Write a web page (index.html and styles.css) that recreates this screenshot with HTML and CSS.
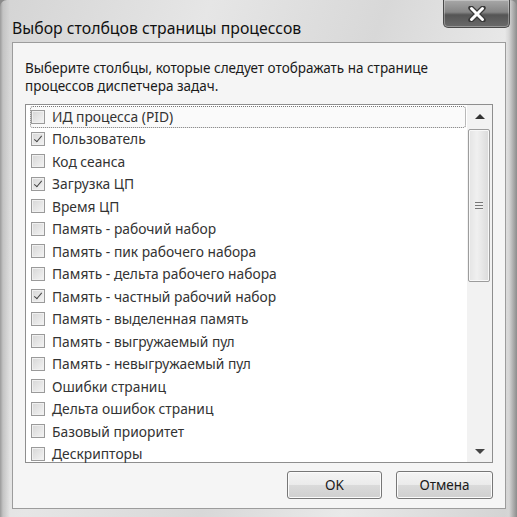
FILE: index.html
```html
<!DOCTYPE html>
<html lang="ru">
<head>
  <meta charset="UTF-8">
  <title>Выбор столбцов страницы процессов</title>
  <link rel="stylesheet" href="styles.css">
</head>
<body>

<div class="window">
  <div class="titlebar">
    <div class="title">Выбор столбцов страницы процессов</div>
    <div class="close-btn">
      <svg width="20" height="16" viewBox="0 0 20 16">
        <path d="M4 2 L16 14 M16 2 L4 14" stroke="#3a3a3a" stroke-width="5.4" stroke-linecap="round"/>
        <path d="M4.5 2.5 L15.5 13.5 M15.5 2.5 L4.5 13.5" stroke="#ffffff" stroke-width="3" stroke-linecap="round"/>
      </svg>
    </div>
  </div>

  <div class="client">
    <p class="hint">Выберите столбцы, которые следует отображать на странице<br>процессов диспетчера задач.</p>

    <div class="listbox">
      <ul class="items">
        <li class="item focused"><span class="check"></span>ИД процесса (PID)</li>
        <li class="item"><span class="check on"></span>Пользователь</li>
        <li class="item"><span class="check"></span>Код сеанса</li>
        <li class="item"><span class="check on"></span>Загрузка ЦП</li>
        <li class="item"><span class="check"></span>Время ЦП</li>
        <li class="item"><span class="check"></span>Память - рабочий набор</li>
        <li class="item"><span class="check"></span>Память - пик рабочего набора</li>
        <li class="item"><span class="check"></span>Память - дельта рабочего набора</li>
        <li class="item"><span class="check on"></span>Память - частный рабочий набор</li>
        <li class="item"><span class="check"></span>Память - выделенная память</li>
        <li class="item"><span class="check"></span>Память - выгружаемый пул</li>
        <li class="item"><span class="check"></span>Память - невыгружаемый пул</li>
        <li class="item"><span class="check"></span>Ошибки страниц</li>
        <li class="item"><span class="check"></span>Дельта ошибок страниц</li>
        <li class="item"><span class="check"></span>Базовый приоритет</li>
        <li class="item"><span class="check"></span>Дескрипторы</li>
      </ul>

      <!-- vertical scrollbar -->
      <div class="scrollbar">
        <div class="arrow up"></div>
        <div class="track">
          <div class="thumb"><span class="grip"></span></div>
        </div>
        <div class="arrow down"></div>
      </div>
    </div>

    <div class="buttons">
      <button class="btn">OK</button>
      <button class="btn">Отмена</button>
    </div>
  </div>
</div>

</body>
</html>
```

FILE: styles.css
```css
body {
  margin: 0;
  background-color: #8a8a8a;
  font-family: 'Noto Sans', 'Open Sans', sans-serif;
  color: #222;
}
.window {
  width: 517px;
  height: 517px;
  box-sizing: border-box;
  display: flex;
  flex-direction: column;
  border-radius: 7px 7px 0 0;
  background:
    linear-gradient(to right, #9a9a9a 0, #c4c4c4 3px, rgba(220,220,220,0) 10px),
    linear-gradient(to left, #8c8c8c 0, #b0b0b0 4px, #d6d6d6 8px, rgba(220,220,220,0) 12px),
    linear-gradient(110deg, #d4d4d4 0%, #e6e6e6 30%, #d8d8d8 55%, #e9e9e9 75%, #d2d2d2 100%);
  overflow: hidden;
}
/* Title bar */
.titlebar {
  height: 42px;
  display: flex;
  align-items: flex-start;
  padding: 0 7px 0 12px;
}
.title {
  padding-top: 17px;
  font-size: 15.8px;
  line-height: 22px;
  color: #111;
}
.close-btn {
  margin-left: auto;
  width: 67px;
  height: 28px;
  box-sizing: border-box;
  display: flex;
  align-items: center;
  justify-content: center;
  border: 1px solid #4a4a4a;
  border-top: none;
  border-radius: 0 0 5px 5px;
  background: linear-gradient(to bottom, #a8a8a8 0%, #858585 45%, #555 55%, #6a6a6a 100%);
  box-shadow: inset 0 0 0 1px rgba(255,255,255,0.3);
}
/* Client area */
.client {
  margin: 0 11px 8px 12px;
  height: 467px;
  box-sizing: border-box;
  border: 1px solid #9c9c9c;
  background-color: #f5f5f5;
  padding: 16px 12px 8px 12px;
  display: flex;
  flex-direction: column;
}
.hint {
  margin: 0 0 1px;
  font-size: 13.5px;
  line-height: 18px;
  color: #1a1a1a;
}
.listbox {
  margin-top: 8px;
  height: 359px;
  box-sizing: border-box;
  border: 1px solid #8e8e8e;
  background-color: #fff;
  display: flex;
}
.items {
  list-style: none;
  margin: 0;
  padding: 0;
  flex: 1;
}
.item {
  height: 22.5px;
  box-sizing: border-box;
  display: flex;
  align-items: center;
  gap: 7px;
  padding-left: 5px;
  font-size: 13.8px;
  color: #333;
  white-space: nowrap;
}
.item.focused {
  margin: 1px 1px 0 4px;
  padding-left: 0;
  height: 21.5px;
  border: 1px dotted #777;
  border-radius: 3px;
  background-color: #fafafa;
}
.check {
  width: 14px;
  height: 14px;
  box-sizing: border-box;
  border: 1px solid #9a9a9a;
  background: linear-gradient(135deg, #d6d6d6, #f4f4f4);
  box-shadow: inset 0 0 0 1px #f0f0f0;
  flex-shrink: 0;
  position: relative;
}
.check.on::after {
  content: "";
  position: absolute;
  left: 4px;
  top: 1px;
  width: 3px;
  height: 7px;
  border: solid #444;
  border-width: 0 1.6px 1.6px 0;
  transform: rotate(40deg);
}
/* Scrollbar */
.scrollbar {
  width: 24px;
  display: flex;
  flex-direction: column;
  background-color: #f2f2f2;
  padding-left: 1px;
}
.arrow {
  height: 24px;
  display: flex;
  align-items: center;
  justify-content: center;
}
.arrow::before {
  content: "";
  border-left: 5px solid transparent;
  border-right: 5px solid transparent;
}
.arrow.up::before {
  border-bottom: 5px solid #333;
  margin-top: -1px;
}
.arrow.down::before {
  border-top: 5px solid #444;
  margin-top: 2px;
}
.track {
  flex: 1;
  padding: 0 2px 0 0;
}
.thumb {
  height: 153px;
  box-sizing: border-box;
  border: 1px solid #9c9c9c;
  border-radius: 2px;
  background: linear-gradient(to right, #e4e4e4, #f0f0f0 40%, #dadada);
  box-shadow: inset 0 0 0 1px #f8f8f8;
  display: flex;
  align-items: center;
  justify-content: center;
}
.grip {
  width: 8px;
  height: 8px;
  background: repeating-linear-gradient(to bottom, #777 0, #777 1px, #eee 1px, #eee 3px);
}
/* Buttons */
.buttons {
  margin-top: 8px;
  display: flex;
  justify-content: flex-end;
  gap: 14px;
}
.btn {
  height: 28px;
  width: 95px;
  font-family: 'Noto Sans', 'Open Sans', sans-serif;
  font-size: 13.5px;
  color: #1a1a1a;
  border: 1px solid #777;
  border-radius: 3px;
  background: linear-gradient(to bottom, #f4f4f4 0%, #ebebeb 48%, #dadada 52%, #cfcfcf 100%);
  box-shadow: inset 0 0 0 1px #fbfbfb;
}
.btn + .btn {
  width: 97px;
}
```
